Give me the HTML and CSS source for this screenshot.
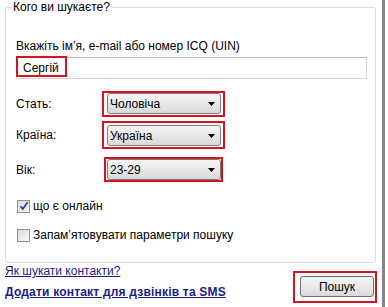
FILE: index.html
```html
<!DOCTYPE html>
<html lang="uk">
<head>
    <meta charset="UTF-8">
    <title>Пошук контактів</title>
    <link rel="stylesheet" href="styles.css">
</head>
<body>
    <div class="page">
        <fieldset class="search">
            <legend>Кого ви шукаєте?</legend>

            <div class="hint">Вкажіть ім’я, e-mail або номер ICQ (UIN)</div>
            <div class="field">
                <span class="value">Сергій</span>
                <span class="mark"></span>
            </div>

            <div class="row row-first">
                <span class="label">Стать:</span>
                <div class="pick">
                    <div class="combo"><span>Чоловіча</span><svg width="7" height="4" viewBox="0 0 7 4"><path d="M0 0H7L3.5 4Z" fill="#000"/></svg></div>
                </div>
            </div>
            <div class="row row-second">
                <span class="label">Країна:</span>
                <div class="pick pick-tall">
                    <div class="combo"><span>Україна</span><svg width="7" height="4" viewBox="0 0 7 4"><path d="M0 0H7L3.5 4Z" fill="#000"/></svg></div>
                </div>
            </div>
            <div class="row row-third">
                <span class="label">Вік:</span>
                <div class="pick pick-narrow">
                    <div class="combo"><span>23-29</span><svg width="7" height="4" viewBox="0 0 7 4"><path d="M0 0H7L3.5 4Z" fill="#000"/></svg></div>
                </div>
            </div>

            <label class="check check-first">
                <span class="box"><svg width="10" height="10" viewBox="0 0 10 10"><path d="M1.5 5.2L3.8 8L8.6 1.2" fill="none" stroke="#2b3f8f" stroke-width="1.8"/></svg></span>
                що є онлайн
            </label>
            <label class="check check-second">
                <span class="box"></span>
                Запам’ятовувати параметри пошуку
            </label>
        </fieldset>

        <div class="bottom">
            <div class="links">
                <a href="#" class="help">Як шукати контакти?</a>
                <a href="#" class="add">Додати контакт для дзвінків та SMS</a>
            </div>
            <div class="submit">
                <button type="button">Пошук</button>
            </div>
        </div>
    </div>
</body>
</html>
```

FILE: styles.css
```css
html {
    background: #fff;
}
body {
    margin: 0;
    font-family: "Liberation Sans", Arial, sans-serif;
    font-size: 12px;
    line-height: 14px;
    color: #000;
}
.page {
    width: 385px;
    min-height: 307px;
    border-right: 3px solid #858585;
    padding-left: 5px;
    box-sizing: border-box;
}
.search {
    width: 371px;
    box-sizing: border-box;
    margin: 0;
    padding: 25px 8px 20px 10px;
    border: 1px solid #dadada;
    border-radius: 3px;
}
.search legend {
    padding: 0 1px;
    margin-left: -4px;
    line-height: 14px;
}
.hint {
    height: 14px;
}
.field {
    position: relative;
    margin-top: 4px;
    height: 22px;
    width: 351px;
    box-sizing: border-box;
    border: 1px solid #d2d2d2;
    border-top-color: #bdbdbd;
    display: flex;
    align-items: center;
    padding-left: 6px;
}
.mark {
    position: absolute;
    left: -1px;
    top: -2px;
    width: 51px;
    height: 21px;
    box-sizing: border-box;
    border: 2px solid #d3141e;
}
.row {
    display: flex;
    align-items: center;
}
.row-first {
    margin-top: 12px;
}
.row-second {
    margin-top: 4px;
}
.row-third {
    margin-top: 8px;
}
.label {
    width: 86px;
}
.pick {
    border: 2px solid #d3141e;
    padding: 0 2px 1px 3px;
}
.pick-tall {
    padding: 2px 2px 1px 3px;
}
.pick-narrow {
    margin-left: 2px;
    padding: 0 0 0 1px;
}
.combo {
    width: 114px;
    height: 21px;
    box-sizing: border-box;
    border: 1px solid #7d7d7d;
    border-radius: 3px;
    background: linear-gradient(#f6f6f6, #e8e8e8 50%, #d9d9d9);
    display: flex;
    align-items: center;
    justify-content: space-between;
    padding: 0 5px 0 2px;
}
.check {
    display: flex;
    align-items: center;
    gap: 3px;
    height: 14px;
}
.check-first {
    margin-top: 17px;
}
.check-second {
    margin-top: 15px;
}
.box {
    width: 13px;
    height: 13px;
    margin-left: 1px;
    box-sizing: border-box;
    border: 1px solid #8e8f8f;
    background: linear-gradient(135deg, #dcdcdc, #f7f7f7);
    display: flex;
    align-items: center;
    justify-content: center;
}
.bottom {
    display: flex;
    justify-content: space-between;
    margin-right: 5px;
}
.links {
    display: flex;
    flex-direction: column;
    padding-top: 1px;
}
.links a {
    color: #1b1b8c;
    line-height: 14px;
}
.help {
    height: 14px;
}
.add {
    margin-top: 7px;
    font-weight: bold;
    letter-spacing: 0.2px;
}
.submit {
    margin-top: 8px;
    border: 2px solid #d3141e;
    padding: 3px 1px 4px 5px;
}
.submit button {
    width: 74px;
    height: 21px;
    border: 1px solid #707070;
    border-radius: 3px;
    background: linear-gradient(#f4f4f4, #e9e9e9 50%, #d8d8d8);
    font-family: "Liberation Sans", Arial, sans-serif;
    font-size: 12px;
    color: #000;
    padding: 0;
}
```
